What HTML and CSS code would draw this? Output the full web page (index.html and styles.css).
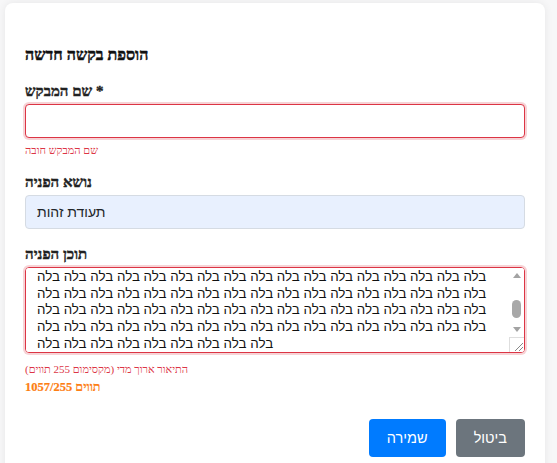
FILE: index.html
```html
<!DOCTYPE html>
<html lang="he">
<head>
<meta charset="utf-8">
<link rel="stylesheet" href="styles.css">
</head>
<body>
<div class="card">
  <h2 class="title">הוספת בקשה חדשה</h2>
  <div class="field">
    <label class="label">שם המבקש *</label>
    <input class="control invalid" type="text">
    <div class="error">שם המבקש חובה</div>
  </div>
  <div class="field">
    <label class="label">נושא הפניה</label>
    <div class="control select">תעודת זהות</div>
  </div>
  <div class="field">
    <label class="label">תוכן הפניה</label>
    <div class="ta-wrap">
      <textarea class="control textarea invalid" id="content" dir="ltr"></textarea>
      <div class="sb" aria-hidden="true">
        <span class="sb-btn sb-up"></span>
        <span class="sb-track"><span class="sb-thumb"></span></span>
        <span class="sb-btn sb-down"></span>
        <span class="sb-grip">
          <svg width="14" height="14" viewBox="0 0 14 14"><path d="M5 13 L13 5 M9 13 L13 9" stroke="#888" stroke-width="1" fill="none"/></svg>
        </span>
      </div>
    </div>
    <div class="error err2">התיאור ארוך מדי (מקסימום 255 תווים)</div>
    <div class="counter">תווים 1057/255</div>
  </div>
  <div class="actions">
    <button class="btn save">שמירה</button>
    <button class="btn cancel">ביטול</button>
  </div>
</div>
<script src="script.js"></script>
</body>
</html>
```

FILE: styles.css
```css
html, body { margin: 0; padding: 0; }
body {
  background: #f7f7f8;
  font-family: "Liberation Serif", serif;
  color: #212529;
}
.card {
  margin: 3px 12px 0 5px;
  background: #fff;
  border-radius: 8px;
  box-shadow: 0 0 8px rgba(0,0,0,0.07);
  padding: 42px 20px 20px 20px;
  min-height: 480px;
  box-sizing: border-box;
}
.title {
  margin: 0 0 17px 0;
  font-size: 16px;
  font-weight: bold;
  line-height: 20px;
  color: #111;
  -webkit-text-stroke: 0.45px #111;
}
.field { margin-bottom: 16px; }
.label {
  display: block;
  font-size: 15px;
  font-weight: bold;
  line-height: 18px;
  margin-bottom: 4px;
  color: #222;
  -webkit-text-stroke: 0.4px #222;
}
.control {
  display: block;
  width: 100%;
  box-sizing: border-box;
  height: 34px;
  border: 1px solid #ced4da;
  border-radius: 4px;
  font-family: "Liberation Sans", sans-serif;
  font-size: 14px;
  padding: 6px 11px;
  background: #fff;
  margin: 0;
  color: #212529;
}
.invalid {
  border-color: #dc3545;
  box-shadow: 0 0 0 2px rgba(220,53,69,0.22);
  outline: none;
}
.select {
  background: #e8f0fe;
  border-color: #d5dbe3;
  line-height: 20px;
}
.ta-wrap { position: relative; }
.textarea {
  height: 86px;
  resize: none;
  font-size: 13.33px;
  line-height: 16.65px;
  padding: 6px 26px 6px 11px;
  direction: ltr;
  text-align: left;
  unicode-bidi: isolate;
  color: #111;
}
.sb {
  position: absolute;
  top: 1px;
  right: 1px;
  bottom: 1px;
  width: 15px;
  display: flex;
  flex-direction: column;
  background: #fff;
  border-radius: 0 3px 3px 0;
}
.sb-btn {
  height: 15px;
  flex: none;
  display: flex;
  align-items: center;
  justify-content: center;
}
.sb-btn::before {
  content: "";
  width: 0;
  height: 0;
  border-left: 4px solid transparent;
  border-right: 4px solid transparent;
}
.sb-up::before { border-bottom: 5px solid #a3a3a3; }
.sb-down::before { border-top: 5px solid #a3a3a3; }
.sb-track {
  flex: 1;
  display: flex;
  flex-direction: column;
  align-items: center;
}
.sb-thumb {
  margin-top: 17px;
  width: 9px;
  height: 18px;
  border-radius: 5px;
  background: #a8a8a8;
}
.sb-grip {
  height: 15px;
  flex: none;
  box-sizing: border-box;
  border-top: 1px solid #dedede;
  border-left: 1px solid #dedede;
  display: flex;
  align-items: flex-end;
  justify-content: flex-end;
}
.sb-grip svg { display: block; }
.error {
  font-size: 11px;
  color: #dc3545;
  margin-top: 5.5px;
  line-height: 13px;
}
.err2 { margin-top: 10px; }
.counter {
  font-size: 12.5px;
  font-weight: bold;
  color: #fd7e14;
  margin-top: 4px;
  line-height: 15px;
  -webkit-text-stroke: 0.2px #fd7e14;
}
.actions {
  display: flex;
  justify-content: flex-end;
  gap: 10px;
  margin-top: 24.5px;
}
.btn {
  font-family: "Liberation Sans", sans-serif;
  font-size: 14.5px;
  color: #fff;
  border: none;
  border-radius: 4px;
  height: 38px;
  padding: 0 18px;
}
.save { background: #007bff; }
.cancel { background: #6c757d; }
```

FILE: script.js
```js
var ta = document.getElementById('content');
function rep(n) {
  var w = [];
  for (var i = 0; i < n; i++) w.push('בלה');
  return w.join(' ');
}
ta.value = '\u200E' + rep(196) + '\n\u200E' + rep(68);
ta.scrollTop = 6 + 7 * 16.65 - 1.5;
```
